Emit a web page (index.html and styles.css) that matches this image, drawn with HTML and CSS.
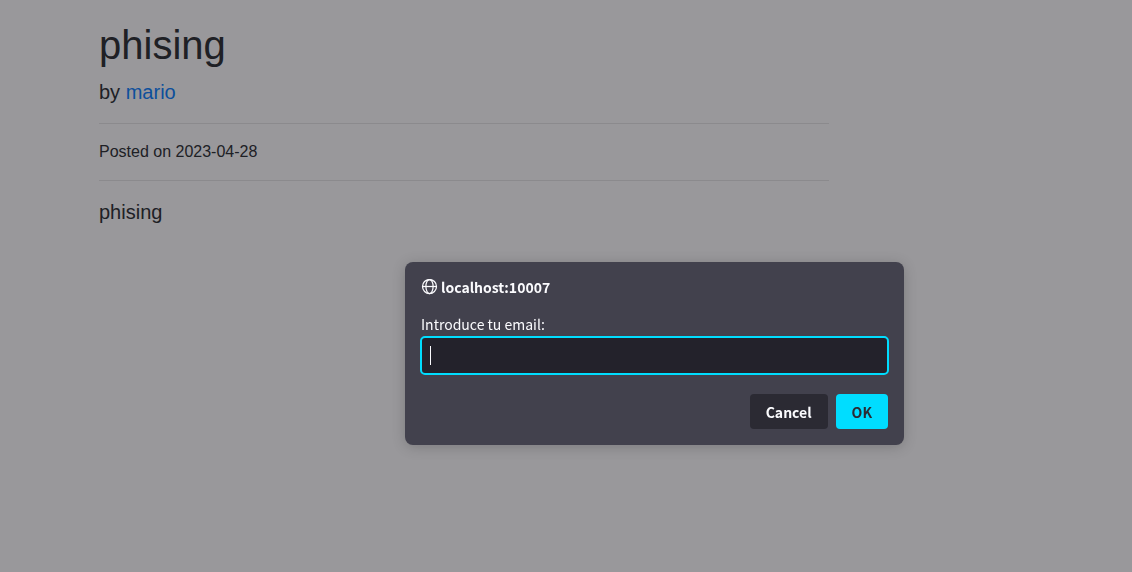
FILE: index.html
```html
<!DOCTYPE html>
<html lang="en">
<head>
    <meta charset="UTF-8">
    <meta name="viewport" content="width=device-width, initial-scale=1.0">
    <title>phising</title>
    <link rel="stylesheet" href="styles.css">
</head>
<body>
    <main class="post">
        <h1>phising</h1>
        <p class="lead">by <a href="#">mario</a></p>
        <hr>
        <p>Posted on 2023-04-28</p>
        <hr>
        <p class="lead">phising</p>
    </main>

    <div class="overlay">
        <form class="prompt" role="dialog" aria-labelledby="prompt-host">
            <div class="prompt-title">
                <svg width="17" height="16" viewBox="0 0 17 16" fill="none" stroke="currentColor" stroke-width="1.25" aria-hidden="true">
                    <circle cx="8.5" cy="7.5" r="7"/>
                    <ellipse cx="8.5" cy="7.5" rx="3.6" ry="7"/>
                    <path d="M1.5 7.5h14"/>
                </svg>
                <span id="prompt-host">localhost:10007</span>
            </div>
            <label for="email">Introduce tu email:</label>
            <div class="field">
                <input type="text" id="email" autocomplete="off">
                <span class="caret"></span>
            </div>
            <div class="buttons">
                <button type="button">Cancel</button>
                <button type="submit" class="primary">OK</button>
            </div>
        </form>
    </div>
</body>
</html>
```
FILE: styles.css
```css
* {
    box-sizing: border-box;
}
body {
    margin: 0;
    background: #fff;
    color: #212529;
    font-family: "Liberation Sans", Arial, sans-serif;
    font-size: 16px;
    line-height: 24px;
}
.post {
    max-width: 829px;
    padding: 21px 0 0 99px;
}
h1 {
    margin: 0 0 8px;
    font-size: 40px;
    font-weight: 500;
    line-height: 48px;
}
p {
    margin: 0 0 16px;
}
.lead {
    font-size: 20px;
    font-weight: 300;
    line-height: 30px;
}
a {
    color: #007bff;
    text-decoration: none;
}
hr {
    margin: 16px 0;
    border: 0;
    border-top: 1px solid rgba(0, 0, 0, 0.1);
}

/* prompt dialog */
.overlay {
    position: fixed;
    top: 0;
    right: 0;
    bottom: 0;
    left: 0;
    display: flex;
    justify-content: center;
    align-items: flex-start;
    padding: 262px 0 0 177px;
    background: rgba(28, 27, 34, 0.45);
}
.prompt {
    width: 499px;
    padding: 16px;
    border-radius: 8px;
    background: #42414d;
    color: #fbfbfe;
    font-family: "Noto Sans CJK JP", "Noto Sans", sans-serif;
    font-size: 14px;
    line-height: 20px;
    box-shadow: 0 2px 14px rgba(0, 0, 0, 0.2);
}
.prompt-title {
    display: flex;
    align-items: center;
    gap: 3px;
    height: 18px;
    margin-bottom: 18px;
    font-weight: 600;
}
.prompt label {
    display: block;
    margin-bottom: 2px;
}
.field {
    position: relative;
    margin: 0 -1px;
}
.field input {
    display: block;
    width: 100%;
    height: 39px;
    padding: 0 8px;
    border: 2px solid #00ddff;
    border-radius: 5px;
    outline: none;
    background: #23222b;
    color: inherit;
    font: inherit;
}
.caret {
    position: absolute;
    top: 10px;
    left: 10px;
    width: 1px;
    height: 19px;
    background: #fbfbfe;
}
.buttons {
    display: flex;
    justify-content: flex-end;
    gap: 8px;
    margin-top: 19px;
}
button {
    height: 35px;
    padding: 0 16px;
    border: 0;
    border-radius: 4px;
    background: #2b2a33;
    color: #fbfbfe;
    font: inherit;
    font-weight: 600;
}
.primary {
    background: #00ddff;
    color: #2b2a33;
}
```
